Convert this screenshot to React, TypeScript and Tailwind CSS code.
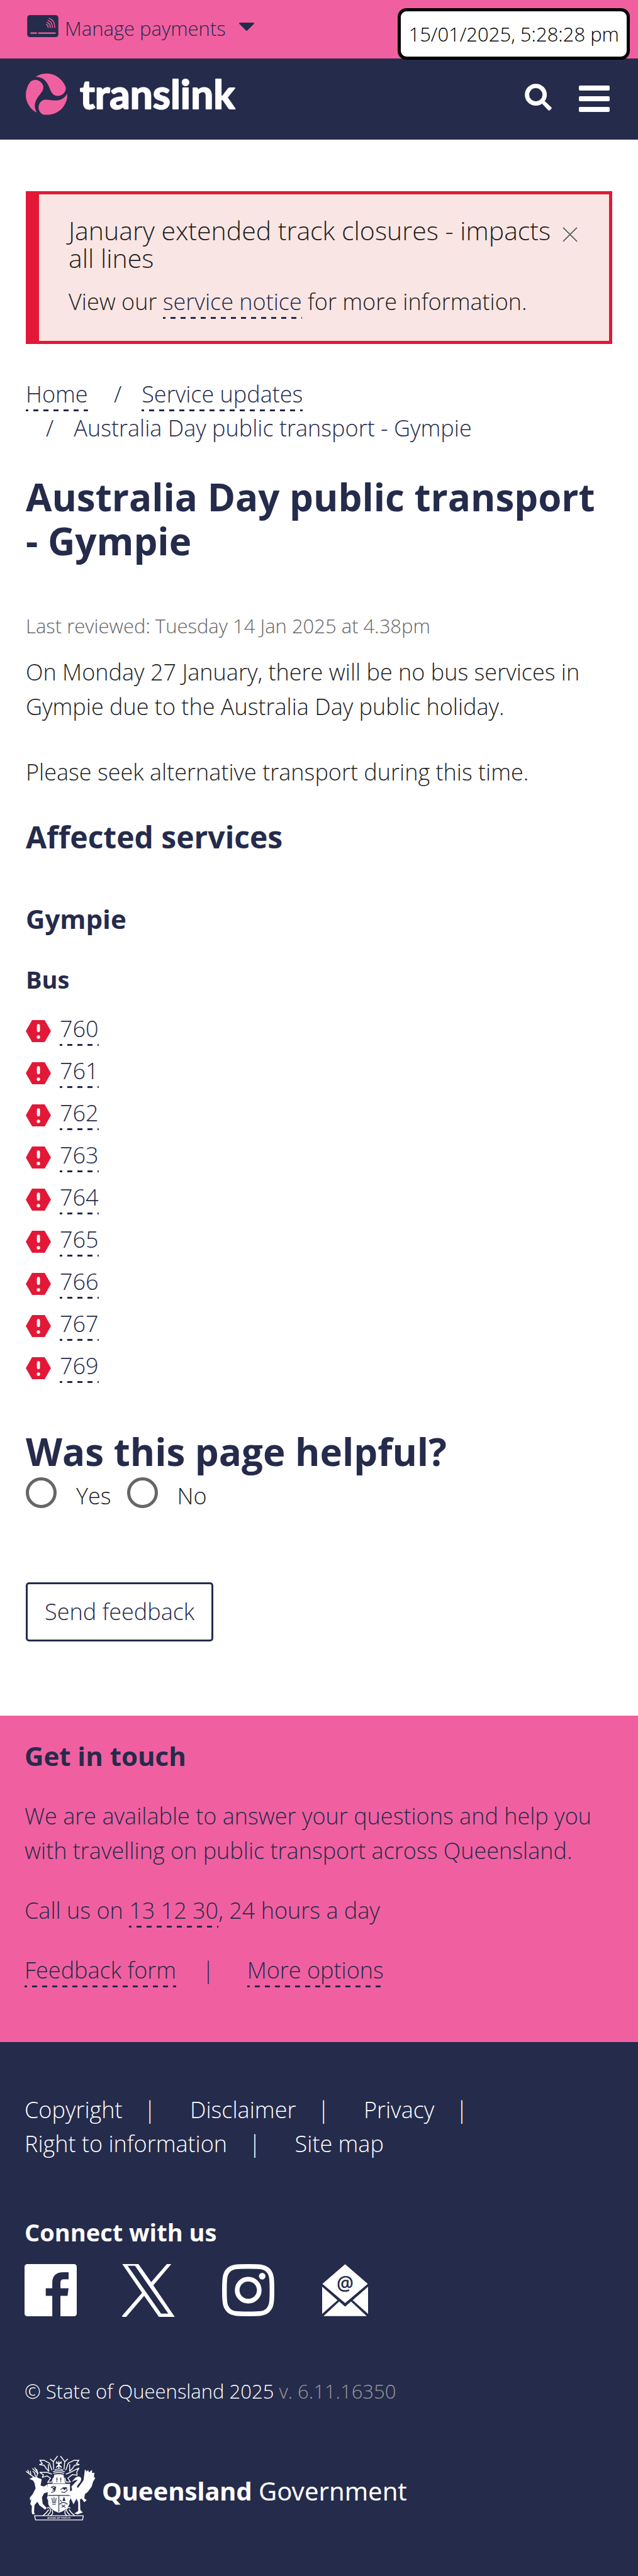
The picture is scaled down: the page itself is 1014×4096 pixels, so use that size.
import React from "react";

const SERVICES = ["760", "761", "762", "763", "764", "765", "766", "767", "769"];

const heading = "font-['Open_Sans'] font-bold text-[#252b4b]";

function DashedLink({ children, href = "#" }: { children: React.ReactNode; href?: string }) {
  return (
    <a
      href={href}
      className="bg-[repeating-linear-gradient(90deg,#252b4b_0_4px,transparent_4px_12px,#252b4b_12px_16px)] bg-[length:100%_3px] bg-bottom bg-no-repeat pb-[3px] text-[#252b4b]"
    >
      {children}
    </a>
  );
}

function CardIcon() {
  return (
    <svg viewBox="0 0 58 41" className="h-[35px] w-[50px]" aria-hidden="true">
      <rect width="58" height="41" rx="5" fill="#252b4b" />
      <g stroke="#f060a0" fill="none" strokeLinecap="round">
        <path d="M7 33.500H17M21.500 33.500H52" strokeWidth="2.600" />
        <path
          strokeWidth="1.800"
          d="M35.500 17.500Q39 18.500 39 23M37 13.700Q43 15.500 43 23M38.700 9.800Q47 12.500 47 23M40.800 6Q51.300 9.500 51.300 23"
        />
      </g>
    </svg>
  );
}

const BLADE =
  "M55 18C75 4 95 0 117 0C170 0 208 38 222 75C226 100 205 124 178 124C150 124 141 103 134 85C122 52 103 18 55 18Z";

function Logo() {
  return (
    <a href="#" aria-label="translink" className="block">
      <svg viewBox="0 0 360 80" className="h-[80px] w-[360px] overflow-visible">
        <g fill="#f060a0" transform="scale(0.286)">
          <path d={BLADE} />
          <path d={BLADE} transform="rotate(120 115.500 115.500)" />
          <path d={BLADE} transform="rotate(240 115.500 115.500)" />
        </g>
        <text
          x="86"
          y="56"
          fontFamily="Lato, sans-serif"
          fontWeight="700"
          fontSize="64"
          fill="#fff"
          stroke="#fff"
          strokeWidth="2"
          strokeLinejoin="round"
        >
          translink
        </text>
      </svg>
    </a>
  );
}

function AlertHexagon() {
  return (
    <svg viewBox="0 0 46 40" className="mt-[13px] h-[35px] w-[40px]" aria-hidden="true">
      <path d="M11.500 0H34.500L46 20L34.500 40H11.500L0 20Z" fill="#e31837" />
      <rect x="20.300" y="7" width="5.600" height="15" rx="2.800" fill="#fff" />
      <circle cx="23.100" cy="31" r="3.100" fill="#fff" />
    </svg>
  );
}

function Crest() {
  return (
    <svg viewBox="50 52 400 372" className="h-[105px] w-[113px]" aria-hidden="true">
      <g fill="#fff">
        <path d="M78 188L100 178L118 178L128 184L146 190L144 205L140 226L158 232L178 220L184 262L160 270L148 292L152 328L174 352L166 362L134 338L122 318L106 336L103 375L108 388L93 388L90 374L91 342L82 330L88 304L80 310L80 294L96 274L112 242L106 212L98 198Z" />
        <path d="M352 238L382 196L390 134L400 148L408 138L412 152L430 138L430 156L444 154L440 176L448 184L436 204L428 232L406 262L390 274L386 298L400 308L386 320L372 300L362 304L364 364L378 378L350 388L330 384L352 370L352 320L342 300L326 332L310 300L302 262L318 252L314 232L330 214L350 194L334 196L314 206L336 182Q358 168 368 184Q374 198 350 222L344 236Z" />
        <path d="M180 217H306V284L310 296L303 312V330Q294 362 243 380Q192 362 183 330V312L176 296L180 284Z" />
        <path d="M216 172L226 166H260L270 172L280 214H206Z" />
      </g>
      <g stroke="#252b4b" fill="none" strokeWidth="4">
        <path d="M183 282H303M243 282V376M198 238L212 230L226 236L220 258L200 266M206 252H222M252 250L268 238H286L290 254L274 266L256 262" />
        <path d="M204 296L208 318M216 292V320M228 296L224 318M204 322H228M206 332H226M246 332Q268 312 292 332M258 334L280 350M280 334L258 350M250 306L258 318" />
        <path d="M232 180V208M226 190H238M254 180V208M248 190H260" strokeWidth="3" />
      </g>
      <g stroke="#252b4b" fill="#252b4b">
        <path d="M200 232L214 240L226 232L218 254Z M262 240L288 236L276 252Z M264 312L272 290L280 312Z" />
      </g>
      <g stroke="#fff" fill="none" strokeWidth="5" strokeLinejoin="round">
        <path d="M102 178L84 166L58 146M76 160L68 138M86 166L82 144M118 178L124 152L106 124M122 156L94 130M126 162L118 134M112 176L106 154L96 146" />
        <path d="M214 136L212 92L236 60M272 136L276 92L252 60M214 94L194 76M274 94L294 76M226 100H260M230 118H258M243 88V132M228 90L258 126M258 90L228 126" />
        <path d="M210 148Q243 138 276 148M212 158Q243 148 272 158M220 138Q243 128 266 138M216 168Q243 160 270 168" />
        <path d="M204 140L190 100L160 84L136 84L150 102L134 108L160 112L172 130L186 146L184 106M282 140L296 100L328 84L356 84L342 102L358 108L332 112L320 130L304 146L304 106" />
        <path d="M204 162L178 152L136 152L156 166L150 180L176 172L196 184L180 208L204 206L212 182M282 162L308 152L356 128L344 150L346 168L320 164L294 184L308 206L284 206L276 182" />
        <path d="M176 354Q184 346 194 356Q204 372 180 392M186 362Q174 380 154 396M308 354Q298 346 288 356Q280 372 306 392M300 362Q312 380 332 396M204 364Q216 386 196 396M280 364Q270 386 290 396" />
        <path d="M106 396H381L376 420H112Z" />
      </g>
      <text x="243" y="413" textAnchor="middle" fontFamily="Open Sans, sans-serif" fontWeight="600" fontSize="15" fill="#fff">
        AUDAX AT FIDELIS
      </text>
    </svg>
  );
}

function SocialIcons() {
  return (
    <div className="mt-[21px] flex items-start">
      <a href="#" aria-label="Facebook" className="mr-[72px]">
        <svg viewBox="0 0 96 96" className="size-[83px]">
          <path
            fill="#fff"
            d="M5 0H91a5 5 0 0 1 5 5V91a5 5 0 0 1-5 5H66V58.500H79L81 44.500H66V34Q66 28 72 28H81V15H71C58 15 51 22 51 34V44.500H39V58.500H51V96H5a5 5 0 0 1-5-5V5a5 5 0 0 1 5-5Z"
          />
        </svg>
      </a>
      <a href="#" aria-label="X" className="mr-[75px]">
        <svg viewBox="0 0 292 294" className="h-[84px] w-[84px]">
          <path
            fill="#fff"
            fillRule="evenodd"
            d="M0 0H90L161 101L248 0H273L173 118L292 294H204L122 177L22 294H0V287L110 160ZM30 10L216 276H256L71 10Z"
          />
        </svg>
      </a>
      <a href="#" aria-label="Instagram" className="mr-[76px]">
        <svg viewBox="0 0 96 96" className="size-[83px]">
          <g fill="none" stroke="#fff" strokeWidth="8.600">
            <path d="M48 4.300C72 4.300 77 5 83 10C91 17 91.700 25 91.700 48C91.700 71 91 79 83 86C77 91 72 91.700 48 91.700C24 91.700 19 91 13 86C5 79 4.300 71 4.300 48C4.300 25 5 17 13 10C19 5 24 4.300 48 4.300Z" />
            <circle cx="48" cy="48" r="20.300" />
          </g>
          <circle cx="73.700" cy="22.300" r="6" fill="#fff" />
        </svg>
      </a>
      <a href="#" aria-label="Email">
        <svg viewBox="0 0 85 96" className="h-[83px] w-[73px]">
          <path
            fill="#fff"
            d="M42.500 0L84.500 36.500L42.500 72L.5 36.500ZM0 41.500L28.500 66.500L0 92ZM85 41.500L56.500 66.500L85 92ZM2.500 96L31.500 69L42.500 78.500L53.500 69L82.500 96Z"
          />
          <text x="42.500" y="47" textAnchor="middle" fontFamily="Open Sans, sans-serif" fontWeight="600" fontSize="35" fill="#252b4b">
            @
          </text>
        </svg>
      </a>
    </div>
  );
}

function FooterLink({ children, last = false }: { children: React.ReactNode; last?: boolean }) {
  return (
    <li className="flex">
      <a href="#">{children}</a>
      {!last && <span className="mr-[54px] ml-[34px]">|</span>}
    </li>
  );
}

export default function App() {
  return (
    <div className="relative bg-white font-['Open_Sans',sans-serif] text-[36px] leading-[54px] font-light text-[#1e1e1e]">
      <div className="flex h-[93px] items-start bg-[#f060a0] pt-6 pl-[43px]">
        <button className="flex items-start text-[31px] leading-[42px] text-[#252b4b]">
          <CardIcon />
          <span className="ml-[10px]">Manage payments</span>
          <svg viewBox="0 0 24 13" className="mt-3 ml-[21px] h-[13px] w-6" aria-hidden="true">
            <path d="M1 0H23Q25 1 23 2.500L13 12.500Q12 13.500 11 12.500L1 2.500Q-1 1 1 0Z" fill="#252b4b" />
          </svg>
        </button>
      </div>
      <div className="absolute top-[13px] right-[13px] flex h-[82px] items-center rounded-[14px] border-[5px] border-black bg-white px-3 text-[31px] leading-[42px] text-black">
        15/01/2025, 5:28:28 pm
      </div>

      <header className="flex h-[129px] items-start justify-between bg-[#252b4b] pt-6 pr-[45px] pl-[41px]">
        <Logo />
        <div className="flex items-start gap-[43px] pt-4">
          <button aria-label="Search">
            <svg viewBox="0 0 50 50" className="size-[43px]">
              <circle cx="20.500" cy="20.500" r="16.300" fill="none" stroke="#fff" strokeWidth="8" />
              <path d="M34 32L38 33L49 43.500Q50.500 45 49 46.500L46.500 49Q45 50.500 43.500 49L33 38L32 34Z" fill="#fff" />
            </svg>
          </button>
          <button aria-label="Menu" className="flex flex-col gap-[9px] pt-[3px]">
            <span className="h-[8px] w-[49px] rounded-[2px] bg-white" />
            <span className="h-[8px] w-[49px] rounded-[2px] bg-white" />
            <span className="h-[8px] w-[49px] rounded-[2px] bg-white" />
          </button>
        </div>
      </header>

      <main className="px-[41px] pt-[82px] pb-[118px]">
        <section className="border-[5px] border-l-[21px] border-[#e31837] bg-[#f9e5e3] pt-[35px] pr-[50px] pb-[35px] pl-[47px]">
          <div className="flex items-start">
            <h2 className="flex-1 text-[41px] leading-[44px]">January extended track closures - impacts all lines</h2>
            <button aria-label="Close" className="mt-[17px] shrink-0">
              <svg viewBox="0 0 24 24" className="size-6">
                <path d="M1 3L23 25M23 3L1 25" stroke="#fff" strokeWidth="2" />
                <path d="M1 1L23 23M23 1L1 23" stroke="#666" strokeWidth="2" />
              </svg>
            </button>
          </div>
          <p className="mt-[21px]">
            View our <DashedLink>service notice</DashedLink> for more information.
          </p>
        </section>

        <nav aria-label="Breadcrumb" className="mt-[53px] text-[#252b4b]">
          <ol>
            <li className="inline">
              <DashedLink>Home</DashedLink>
            </li>{" "}
            <li className="inline">
              <span className="mx-8">/</span>
              <DashedLink>Service updates</DashedLink>
            </li>{" "}
            <li className="inline-block">
              <span className="mx-8">/</span>
              Australia Day public transport - Gympie
            </li>
          </ol>
        </nav>

        <h1 className={heading + " mt-[47px] text-[60px] leading-[70px]"}>Australia Day public transport - Gympie</h1>
        <p className="mt-[79px] text-[31px] leading-[42px] text-[#666]">Last reviewed: Tuesday 14 Jan 2025 at 4.38pm</p>
        <p className="mt-[25px] leading-[55px]">
          On Monday 27 January, there will be no bus services in Gympie due to the Australia Day public holiday.
        </p>
        <p className="mt-[49px] leading-[55px]">Please seek alternative transport during this time.</p>

        <h2 className={heading + " mt-[46px] text-[48px] leading-[60px]"}>Affected services</h2>
        <h3 className={heading + " mt-[70px] text-[42px] leading-[60px]"}>Gympie</h3>
        <h4 className={heading + " mt-[36px] text-[38px] leading-[60px]"}>Bus</h4>
        <ul className="mt-[22px]">
          {SERVICES.map((s) => (
            <li key={s} className="flex h-[67px] items-start gap-[14px]">
              <AlertHexagon />
              <span>
                <DashedLink>{s}</DashedLink>
              </span>
            </li>
          ))}
        </ul>

        <form onSubmit={(e) => e.preventDefault()}>
          <h2 className={heading + " mt-[61px] text-[60px] leading-[70px]"}>Was this page helpful?</h2>
          <div className="mt-[6px] flex gap-[25px]">
            {["Yes", "No"].map((v) => (
              <label key={v} className="flex items-start gap-[31px] leading-[60px]">
                <input
                  type="radio"
                  name="helpful"
                  value={v}
                  className="size-[49px] appearance-none rounded-full border-[5px] border-[#666] checked:bg-[#252b4b]"
                />
                {v}
              </label>
            ))}
          </div>
          <button
            type="submit"
            className="mt-[107px] block h-[94px] rounded-[5px] border-[3px] border-[#252b4b] px-[27px] text-[#252b4b]"
          >
            Send feedback
          </button>
        </form>
      </main>

      <section className="bg-[#f060a0] px-[39px] pt-[34px] pb-[87px] leading-[55px] text-[#252b4b]">
        <h2 className={heading + " text-[42px] leading-[60px]"}>Get in touch</h2>
        <p className="mt-[38px]">
          We are available to answer your questions and help you with travelling on public transport across Queensland.
        </p>
        <p className="mt-10">
          Call us on <DashedLink>13 12 30</DashedLink>, 24 hours a day
        </p>
        <p className="mt-10">
          <DashedLink>Feedback form</DashedLink>
          <span className="mr-[52px] ml-[41px]">|</span>
          <DashedLink>More options</DashedLink>
        </p>
      </section>

      <footer className="bg-[#252b4b] px-[39px] pt-[81px] pb-[88px] text-white">
        <ul className="flex max-w-[800px] flex-wrap">
          <FooterLink>Copyright</FooterLink>
          <FooterLink>Disclaimer</FooterLink>
          <FooterLink>Privacy</FooterLink>
          <FooterLink>Right to information</FooterLink>
          <FooterLink last>Site map</FooterLink>
        </ul>
        <h3 className="mt-[83px] text-[38px] leading-[60px] font-bold">Connect with us</h3>
        <SocialIcons />
        <p className="mt-[97px] text-[31px] leading-[42px]">
          © State of Queensland 2025 <span className="text-[#999]">v. 6.11.16350</span>
        </p>
        <a href="#" className="mt-20 flex h-[105px] items-center gap-[10px] font-['Noto_Sans'] text-[40px] font-normal">
          <Crest />
          <span className="pt-[10px]">
            <b className="font-bold">Queensland</b> Government
          </span>
        </a>
      </footer>
    </div>
  );
}
